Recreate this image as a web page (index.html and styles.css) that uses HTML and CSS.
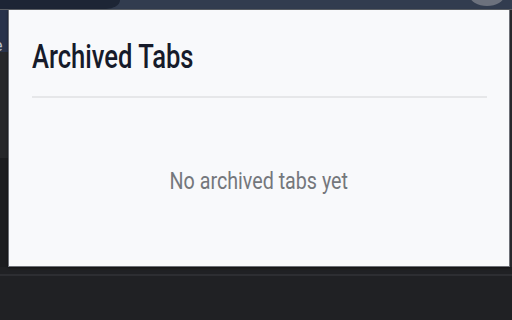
FILE: index.html
```html
<!DOCTYPE html>
<html>
<head>
  <title>Archived Tabs</title>
  <link rel="stylesheet" href="styles.css">
</head>
<body>
  <div class="tabstrip">
    <div class="tab-dark"></div>
    <div class="tab-light"><span class="avatar"></span></div>
  </div>

  <div class="main">
    <div class="side"><span class="side-text">e</span></div>

    <div class="panel">
      <h1 class="title"><span>Archived Tabs</span></h1>
      <hr class="divider">
      <p class="empty"><span>No archived tabs yet</span></p>
    </div>

    <div class="edge"></div>
  </div>

  <div class="footer"></div>
</body>
</html>
```

FILE: styles.css
```css
html, body {
  margin: 0;
  height: 100%;
  background: #202124;
  font-family: Roboto, "Noto Sans", sans-serif;
  overflow: hidden;
}

/* top strip of the browser behind the popup */
.tabstrip {
  display: flex;
  height: 9px;
  background: #323c4f;
  border-bottom: 1px solid #5d6167;
}
.tab-dark {
  width: 120px;
  background: #1d2535;
  border-bottom-right-radius: 14px 9px;
}
.tab-light {
  flex: 1;
  position: relative;
}
.avatar {
  position: absolute;
  right: 8px;
  top: -14px;
  width: 34px;
  height: 20px;
  border-radius: 50%;
  background: #6c717d;
}

.main {
  display: flex;
  height: 257px;
}
.side {
  width: 8px;
  background: linear-gradient(#28324a 0 42px, #26272a 42px 148px, #1c1d20 148px);
  overflow: hidden;
}
.side-text {
  display: block;
  margin: 26px 0 0 -6px;
  color: #b8c0cc;
  font-size: 16px;
}

.panel {
  width: 500px;
  background: #f8f9fb;
  border: 1px solid #6d7077;
  border-top: none;
  box-shadow: 0 1px 2px rgba(0,0,0,0.5);
}
.edge {
  flex: 1;
  background: #27282c;
}

.title {
  margin: 28px 0 0 23px;
  font-size: 33px;
  font-weight: 500;
  line-height: 38px;
  color: #161b2a;
}
.title span {
  display: inline-block;
  transform: scaleX(0.775);
  transform-origin: left center;
}

.divider {
  margin: 20px 22px 0 23px;
  border: none;
  height: 2px;
  background: #e6e7e9;
}

.empty {
  margin: 69px 0 0;
  text-align: center;
  font-size: 24px;
  color: #74777c;
}
.empty span {
  display: inline-block;
  transform: scaleX(0.82);
}

.footer {
  margin-top: 7px;
  border-top: 2px solid #2d2e32;
  height: 60px;
}
```
